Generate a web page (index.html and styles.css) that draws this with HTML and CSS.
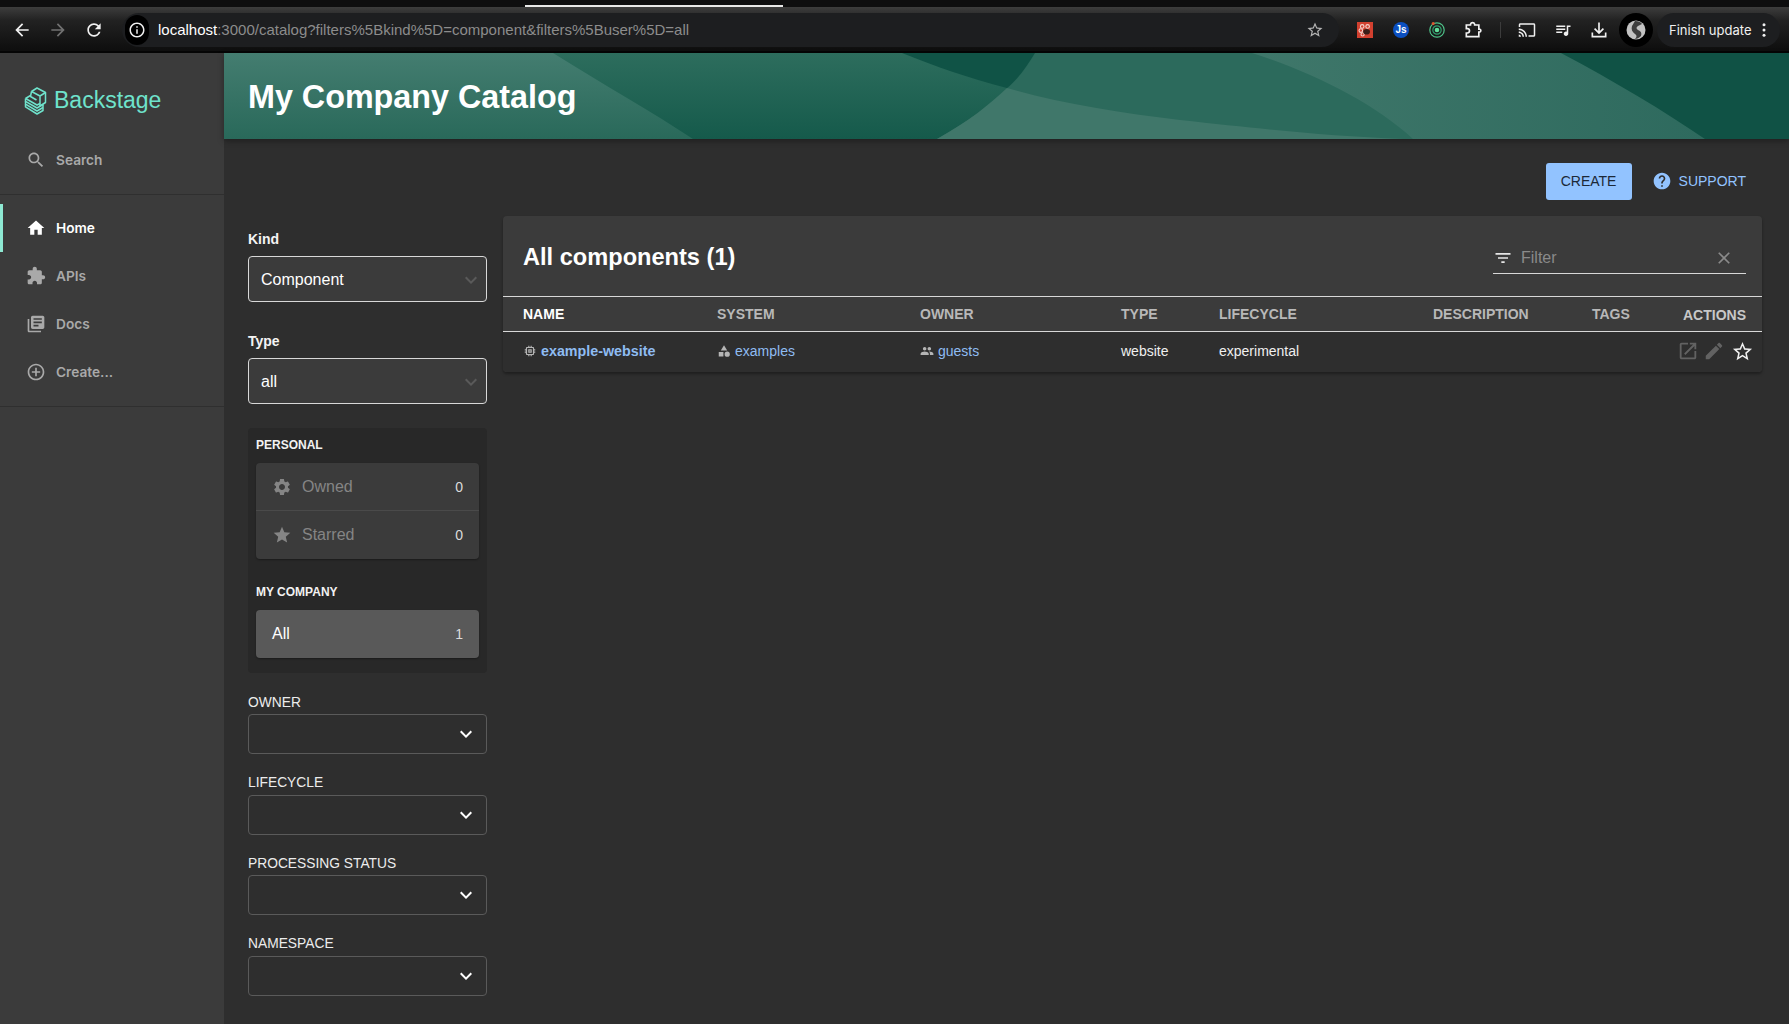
FILE: index.html
```html
<!DOCTYPE html>
<html lang="en">
<head>
    <meta charset="UTF-8">
    <meta name="viewport" content="width=device-width, initial-scale=1.0">
    <title>My Company Catalog</title>
    <link rel="stylesheet" href="styles.css">
</head>
<body>
    <svg class="defs" width="0" height="0">
        <symbol id="chevron" viewBox="0 0 24 24"><path d="M16.59 8.59L12 13.17 7.41 8.59 6 10l6 6 6-6z"/></symbol>
    </svg>

    <div class="tabstrip"><div class="tab-mark"></div></div>

    <div class="toolbar">
        <span class="tool"><svg viewBox="0 0 24 24" class="ico-20"><path d="M20 11H7.83l5.59-5.59L12 4l-8 8 8 8 1.41-1.41L7.83 13H20v-2z"/></svg></span>
        <span class="tool tool-off"><svg viewBox="0 0 24 24" class="ico-20"><path d="M12 4l-1.41 1.41L16.17 11H4v2h12.17l-5.58 5.59L12 20l8-8z"/></svg></span>
        <span class="tool"><svg viewBox="0 0 24 24" class="ico-20"><path d="M17.65 6.35C16.2 4.9 14.21 4 12 4c-4.42 0-7.99 3.58-7.99 8s3.57 8 7.99 8c3.73 0 6.84-2.55 7.73-6h-2.08c-.82 2.33-3.04 4-5.65 4-3.31 0-6-2.69-6-6s2.69-6 6-6c1.66 0 3.14.69 4.22 1.78L13 11h7V4l-2.35 2.35z"/></svg></span>

        <div class="omnibox">
            <span class="site-info">
                <svg viewBox="0 0 24 24" class="ico-18"><path d="M11 7h2v2h-2zm0 4h2v6h-2zm1-9C6.48 2 2 6.48 2 12s4.48 10 10 10 10-4.48 10-10S17.52 2 12 2zm0 18c-4.41 0-8-3.59-8-8s3.59-8 8-8 8 3.59 8 8-3.59 8-8 8z"/></svg>
            </span>
            <span class="url"><b>localhost</b>:3000/catalog?filters%5Bkind%5D=component&amp;filters%5Buser%5D=all</span>
            <svg viewBox="0 0 24 24" class="ico-18 bookmark"><path d="M22 9.24l-7.19-.62L12 2 9.19 8.63 2 9.24l5.46 4.73L5.82 21 12 17.27 18.18 21l-1.63-7.03L22 9.24zM12 15.4l-3.76 2.27 1-4.28-3.32-2.88 4.38-.38L12 6.1l1.71 4.04 4.38.38-3.32 2.88 1 4.28L12 15.4z"/></svg>
        </div>

        <div class="extensions">
            <span class="tool">
                <svg viewBox="0 0 16 16" class="ico-16">
                    <rect width="16" height="16" fill="#d2402f"/>
                    <g fill="none" stroke="#f6d5cf" stroke-width="1.1"><circle cx="5.2" cy="4.4" r="1.8"/><circle cx="10.6" cy="4.4" r="1.8"/><circle cx="3.8" cy="8.6" r="1.8"/><circle cx="5.6" cy="12.4" r="1.6"/></g>
                    <ellipse cx="9.6" cy="9.8" rx="3.4" ry="2.8" fill="#3a1d18"/>
                </svg>
            </span>
            <span class="tool"><span class="js-badge">Js</span></span>
            <span class="tool">
                <svg viewBox="0 0 16 16" class="ico-16">
                    <circle cx="8" cy="8" r="7.2" fill="none" stroke="#4fc48a" stroke-width="1.2"/>
                    <circle cx="8" cy="8" r="4.2" fill="none" stroke="#2f9e6c" stroke-width="1.2"/>
                    <circle cx="8" cy="8" r="2.3" fill="#5fe09a"/>
                    <circle cx="4.2" cy="1.6" r="1.5" fill="#e0562e"/>
                </svg>
            </span>
            <span class="tool">
                <svg viewBox="0 0 24 24" class="ico-20 puzzle"><path d="M4 6h5V5a2.6 2.6 0 0 1 5 0v1h5v5h1.2a1.8 1.8 0 0 1 0 3.4H19V20H4v-4.4h1.2a2.6 2.6 0 0 0 0-5.2H4z"/></svg>
            </span>
        </div>
        <span class="tool-sep"></span>
        <span class="tool"><svg viewBox="0 0 24 24" class="ico-18"><path d="M21 3H3c-1.1 0-2 .9-2 2v3h2V5h18v14h-7v2h7c1.1 0 2-.9 2-2V5c0-1.1-.9-2-2-2zM1 18v3h3c0-1.66-1.34-3-3-3zm0-4v2c2.76 0 5 2.24 5 5h2c0-3.87-3.13-7-7-7zm0-4v2c4.97 0 9 4.03 9 9h2c0-6.08-4.93-11-11-11z"/></svg></span>
        <span class="tool"><svg viewBox="0 0 24 24" class="ico-18"><path d="M15 6H3v2h12V6zm0 4H3v2h12v-2zM3 16h8v-2H3v2zM17 6v8.18c-.31-.11-.65-.18-1-.18-1.66 0-3 1.34-3 3s1.34 3 3 3 3-1.34 3-3V8h3V6h-5z"/></svg></span>
        <span class="tool"><svg viewBox="0 0 24 24" class="ico-20"><path d="M11 3h2v10.2l3.6-3.6L18 11l-6 6-6-6 1.4-1.4 3.6 3.6zM3 15h2v4h14v-4h2v6H3z"/></svg></span>
        <span class="avatar">
            <svg viewBox="0 0 20 20" class="ico-20">
                <circle cx="10" cy="10" r="9.500" fill="#c2c2c2"/>
                <path d="M9 1c3 0 6 1 7 3l-4 2c-2 1-2 3 0 4 3 1 4 3 3 6-2 2-4 3-6 3 2-2 2-4 0-5-3-2-4-5-3-8z" fill="#3e3e3e"/>
            </svg>
        </span>
        <div class="update-pill">
            <span>Finish update</span>
            <svg viewBox="0 0 24 24" class="ico-18"><circle cx="12" cy="5" r="2"/><circle cx="12" cy="12" r="2"/><circle cx="12" cy="19" r="2"/></svg>
        </div>
    </div>

    <div class="app">
        <nav class="sidebar">
            <div class="logo">
                <svg viewBox="0 0 23 28" class="logo-mark">
                    <g fill="none" stroke="#6fe3cc" stroke-width="1.500" stroke-linejoin="round">
                        <path d="M7.500 4.500L13 1l8.500 4.500v10L16 19"/>
                        <path d="M7.500 4.500L16 9v10M16 9l5.500-3.500M7.500 4.500l-1 5 6 3.500"/>
                        <path d="M1.500 11.500l5-3M1.500 11.500L13 18l3-1.500"/>
                        <path d="M1.500 11.500v2.800L13 21l6-3.500"/>
                        <path d="M1.500 14.300v2.800L13 24l6-3.500"/>
                        <path d="M1.500 17.100v2.800L13 27l6-3.500v-6"/>
                    </g>
                </svg>
                <span>Backstage</span>
            </div>
            <a class="nav-item">
                <svg viewBox="0 0 24 24" class="ico-20"><path d="M15.5 14h-.79l-.28-.27C15.41 12.59 16 11.11 16 9.5 16 5.91 13.09 3 9.5 3S3 5.91 3 9.5 5.91 16 9.5 16c1.61 0 3.09-.59 4.23-1.57l.27.28v.79l5 4.99L20.49 19l-4.99-5zm-6 0C7.01 14 5 11.99 5 9.5S7.01 5 9.5 5 14 7.01 14 9.5 11.99 14 9.5 14z"/></svg>
                <span>Search</span>
            </a>
            <div class="nav-group">
                <a class="nav-item nav-active">
                    <svg viewBox="0 0 24 24" class="ico-20"><path d="M10 20v-6h4v6h5v-8h3L12 3 2 12h3v8z"/></svg>
                    <span>Home</span>
                </a>
                <a class="nav-item">
                    <svg viewBox="0 0 24 24" class="ico-20"><path d="M20.5 11H19V7c0-1.1-.9-2-2-2h-4V3.500C13 2.120 11.880 1 10.500 1S8 2.120 8 3.500V5H4c-1.100 0-1.990.9-1.990 2v3.800H3.500c1.490 0 2.700 1.210 2.700 2.700s-1.210 2.700-2.700 2.700H2V20c0 1.100.9 2 2 2h3.800v-1.500c0-1.490 1.210-2.700 2.700-2.700 1.490 0 2.700 1.210 2.700 2.700V22H17c1.100 0 2-.9 2-2v-4h1.500c1.380 0 2.500-1.120 2.500-2.500S21.880 11 20.500 11z"/></svg>
                    <span>APIs</span>
                </a>
                <a class="nav-item">
                    <svg viewBox="0 0 24 24" class="ico-20"><path d="M4 6H2v14c0 1.100.9 2 2 2h14v-2H4V6zm16-4H8c-1.100 0-2 .9-2 2v12c0 1.100.9 2 2 2h12c1.100 0 2-.9 2-2V4c0-1.100-.9-2-2-2zm-1 9H9V9h10v2zm-4 4H9v-2h6v2zm4-8H9V5h10v2z"/></svg>
                    <span>Docs</span>
                </a>
                <a class="nav-item">
                    <svg viewBox="0 0 24 24" class="ico-20"><path d="M13 7h-2v4H7v2h4v4h2v-4h4v-2h-4V7zm-1-5C6.480 2 2 6.480 2 12s4.480 10 10 10 10-4.480 10-10S17.520 2 12 2zm0 18c-4.410 0-8-3.590-8-8s3.590-8 8-8 8 3.590 8 8-3.590 8-8 8z"/></svg>
                    <span>Create...</span>
                </a>
            </div>
        </nav>

        <div class="page">
            <header class="banner">
                <svg class="banner-art" viewBox="0 0 1565 86" preserveAspectRatio="none">
                    <defs>
                        <linearGradient id="gradBase" x1="0" y1="0" x2="0" y2="1"><stop offset="0" stop-color="#2d6d5d"/><stop offset="1" stop-color="#155a4b"/></linearGradient>
                        <linearGradient id="gradLeft" x1="0" y1="0" x2="0" y2="1"><stop offset="0" stop-color="#447d70"/><stop offset="1" stop-color="#29695a"/></linearGradient>
                        <linearGradient id="gradRight" x1="0" y1="0" x2="1" y2="0"><stop offset="0" stop-color="#3f776a"/><stop offset="1" stop-color="#2e6a5e"/></linearGradient>
                    </defs>
                    <rect width="1565" height="86" fill="url(#gradBase)"/>
                    <path d="M0 0H329C380 32 430 60 469 86H0Z" fill="url(#gradLeft)"/>
                    <path d="M811 0C795 30 760 60 713 86H1565V0Z" fill="#2c6a5c"/>
                    <path d="M678 0C710 13 745 25 783 35C795 25 803 13 811 0Z" fill="#105346"/>
                    <path d="M783 35C835 50 895 60 956 67C1040 76 1100 83 1180 86H713C745 68 765 52 783 35Z" fill="#40776a"/>
                    <path d="M1028 0C1090 20 1150 50 1189 86H1481C1440 58 1390 28 1337 0Z" fill="url(#gradRight)"/>
                    <path d="M1337 0C1390 28 1440 58 1481 86H1565V0Z" fill="#105245"/>
                </svg>
                <h1>My Company Catalog</h1>
            </header>

            <main class="content">
                <div class="actions">
                    <button class="btn-create">CREATE</button>
                    <a class="support">
                        <svg viewBox="0 0 24 24" class="ico-20"><path d="M12 2C6.480 2 2 6.480 2 12s4.480 10 10 10 10-4.480 10-10S17.520 2 12 2zm1 17h-2v-2h2v2zm2.070-7.750l-.9.920C13.450 12.900 13 13.500 13 15h-2v-.5c0-1.100.45-2.100 1.170-2.830l1.240-1.260c.37-.36.59-.86.59-1.410 0-1.100-.9-2-2-2s-2 .9-2 2H8c0-2.210 1.790-4 4-4s4 1.790 4 4c0 .88-.36 1.680-.93 2.250z"/></svg>
                        <span>SUPPORT</span>
                    </a>
                </div>

                <div class="columns">
                    <aside class="filters">
                        <label class="field-label">Kind</label>
                        <div class="select-big"><span>Component</span><svg class="chev-dim"><use href="#chevron"/></svg></div>

                        <label class="field-label">Type</label>
                        <div class="select-big"><span>all</span><svg class="chev-dim"><use href="#chevron"/></svg></div>

                        <section class="picker">
                            <h4 class="picker-title">PERSONAL</h4>
                            <div class="picker-list">
                                <div class="picker-row">
                                    <svg viewBox="0 0 24 24" class="ico-20"><path d="M19.140 12.940c.04-.3.06-.61.06-.94 0-.32-.02-.64-.07-.94l2.030-1.580c.18-.14.23-.41.12-.61l-1.920-3.320c-.12-.22-.37-.29-.59-.22l-2.390.96c-.5-.38-1.030-.7-1.620-.94l-.36-2.540c-.04-.24-.24-.41-.48-.41h-3.840c-.24 0-.43.17-.47.41l-.36 2.540c-.59.24-1.130.57-1.620.94l-2.390-.96c-.22-.08-.47 0-.59.22L2.740 8.870c-.12.21-.08.47.12.61l2.030 1.580c-.05.3-.09.63-.09.94s.02.64.07.94l-2.030 1.580c-.18.14-.23.41-.12.61l1.920 3.320c.12.22.37.29.59.22l2.390-.96c.5.38 1.030.7 1.620.94l.36 2.540c.05.24.24.41.48.41h3.840c.24 0 .44-.17.47-.41l.36-2.540c.59-.24 1.130-.56 1.620-.94l2.390.96c.22.08.47 0 .59-.22l1.920-3.320c.12-.22.07-.47-.12-.61l-2.010-1.580zM12 15.600c-1.980 0-3.600-1.620-3.600-3.600s1.620-3.600 3.600-3.600 3.600 1.620 3.600 3.600-1.620 3.600-3.600 3.600z"/></svg>
                                    <span class="picker-name">Owned</span>
                                    <span class="picker-count">0</span>
                                </div>
                                <div class="picker-row">
                                    <svg viewBox="0 0 24 24" class="ico-20"><path d="M12 17.270L18.180 21l-1.640-7.030L22 9.240l-7.190-.61L12 2 9.190 8.630 2 9.240l5.460 4.730L5.820 21z"/></svg>
                                    <span class="picker-name">Starred</span>
                                    <span class="picker-count">0</span>
                                </div>
                            </div>
                            <h4 class="picker-title picker-title-2">MY COMPANY</h4>
                            <div class="picker-row picker-selected">
                                <span class="picker-name">All</span>
                                <span class="picker-count">1</span>
                            </div>
                        </section>

                        <label class="combo-label combo-first">OWNER</label>
                        <div class="combo"><svg class="chev"><use href="#chevron"/></svg></div>
                        <label class="combo-label combo-wide">LIFECYCLE</label>
                        <div class="combo"><svg class="chev"><use href="#chevron"/></svg></div>
                        <label class="combo-label">PROCESSING STATUS</label>
                        <div class="combo"><svg class="chev"><use href="#chevron"/></svg></div>
                        <label class="combo-label combo-wide">NAMESPACE</label>
                        <div class="combo"><svg class="chev"><use href="#chevron"/></svg></div>
                    </aside>

                    <section class="card">
                        <div class="card-head">
                            <h2>All components (1)</h2>
                            <div class="table-filter">
                                <svg viewBox="0 0 24 24" class="ico-20 filter-ico"><path d="M10 18h4v-2h-4v2zM3 6v2h18V6H3zm3 7h12v-2H6v2z"/></svg>
                                <span class="filter-text">Filter</span>
                                <svg viewBox="0 0 24 24" class="ico-20 filter-clear"><path d="M19 6.410L17.590 5 12 10.590 6.410 5 5 6.410 10.590 12 5 17.590 6.410 19 12 13.410 17.590 19 19 17.590 13.410 12z"/></svg>
                            </div>
                        </div>
                        <table class="catalog">
                            <colgroup>
                                <col class="c-name"><col class="c-system"><col class="c-owner"><col class="c-type"><col class="c-life"><col class="c-desc"><col class="c-tags"><col class="c-actions">
                            </colgroup>
                            <thead>
                                <tr>
                                    <th class="th-first">NAME</th>
                                    <th>SYSTEM</th>
                                    <th>OWNER</th>
                                    <th>TYPE</th>
                                    <th>LIFECYCLE</th>
                                    <th>DESCRIPTION</th>
                                    <th>TAGS</th>
                                    <th class="th-actions">ACTIONS</th>
                                </tr>
                            </thead>
                            <tbody>
                                <tr>
                                    <td><a class="link link-strong"><svg viewBox="0 0 24 24" class="ico-14"><path d="M15 9H9v6h6V9zm-2 4h-2v-2h2v2zm8-2V9h-2V7c0-1.100-.9-2-2-2h-2V3h-2v2h-2V3H9v2H7c-1.100 0-2 .9-2 2v2H3v2h2v2H3v2h2v2c0 1.100.9 2 2 2h2v2h2v-2h2v2h2v-2h2c1.100 0 2-.9 2-2v-2h2v-2h-2v-2h2zm-4 6H7V7h10v10z"/></svg>example-website</a></td>
                                    <td><a class="link"><svg viewBox="0 0 24 24" class="ico-14"><path d="M12 2l-5.500 9h11zM17.500 13a4.500 4.500 0 1 0 0 9 4.500 4.500 0 0 0 0-9zM3 13.500h8v8H3z"/></svg>examples</a></td>
                                    <td><a class="link"><svg viewBox="0 0 24 24" class="ico-14"><path d="M16 11c1.660 0 2.990-1.340 2.990-3S17.660 5 16 5c-1.660 0-3 1.340-3 3s1.340 3 3 3zm-8 0c1.660 0 2.990-1.340 2.990-3S9.660 5 8 5C6.340 5 5 6.340 5 8s1.340 3 3 3zm0 2c-2.330 0-7 1.170-7 3.500V19h14v-2.500c0-2.330-4.670-3.500-7-3.500zm8 0c-.29 0-.62.02-.97.05 1.160.84 1.970 1.970 1.970 3.450V19h6v-2.500c0-2.330-4.670-3.500-7-3.500z"/></svg>guests</a></td>
                                    <td>website</td>
                                    <td>experimental</td>
                                    <td></td>
                                    <td></td>
                                    <td class="actions-cell">
                                        <div class="row-actions">
                                            <svg viewBox="0 0 24 24" class="ico-22 act-dim"><path d="M19 19H5V5h7V3H5c-1.110 0-2 .9-2 2v14c0 1.100.89 2 2 2h14c1.100 0 2-.9 2-2v-7h-2v7zM14 3v2h3.590l-9.830 9.830 1.410 1.410L19 6.410V10h2V3h-7z"/></svg>
                                            <svg viewBox="0 0 24 24" class="ico-22 act-dim"><path d="M3 17.250V21h3.750L17.810 9.940l-3.750-3.750L3 17.250zM20.710 7.040c.39-.39.39-1.020 0-1.410l-2.340-2.340c-.39-.39-1.020-.39-1.410 0l-1.830 1.830 3.750 3.750 1.830-1.830z"/></svg>
                                            <svg viewBox="0 0 24 24" class="ico-23 act-star"><path d="M22 9.240l-7.190-.62L12 2 9.190 8.630 2 9.240l5.460 4.730L5.820 21 12 17.270 18.180 21l-1.630-7.030L22 9.240zM12 15.400l-3.760 2.270 1-4.280-3.320-2.880 4.380-.38L12 6.100l1.710 4.040 4.380.38-3.320 2.880 1 4.280L12 15.400z"/></svg>
                                        </div>
                                    </td>
                                </tr>
                            </tbody>
                        </table>
                    </section>
                </div>
            </main>
        </div>
    </div>
</body>
</html>
```

FILE: styles.css
```css
* {
    box-sizing: border-box;
}

html, body {
    margin: 0;
    height: 1024px;
    overflow: hidden;
}

body {
    font-family: "Liberation Sans", Arial, sans-serif;
    background-color: #2e2e2e;
    color: #fff;
    display: flex;
    flex-direction: column;
}

svg {
    fill: currentColor;
    flex-shrink: 0;
    display: block;
}

.defs {
    position: absolute;
}

.ico-14 { width: 14px; height: 14px; }
.ico-16 { width: 16px; height: 16px; }
.ico-18 { width: 18px; height: 18px; }
.ico-20 { width: 20px; height: 20px; }
.ico-22 { width: 22px; height: 22px; }
.ico-23 { width: 23px; height: 23px; }

/* browser chrome */
.tabstrip {
    height: 7px;
    background-color: #0e0e0f;
    display: flex;
    align-items: flex-end;
}

.tab-mark {
    width: 258px;
    height: 2px;
    margin-left: 525px;
    background-color: #e8e8e8;
}

.toolbar {
    height: 46px;
    display: flex;
    align-items: center;
    padding: 1px 0 0 4px;
    background: linear-gradient(#3d3d3d, #222 30%, #0f0f0f 95%);
    border-bottom: 2px solid #050505;
    color: #f0f0f0;
}

.tool {
    width: 36px;
    height: 36px;
    display: flex;
    align-items: center;
    justify-content: center;
}

.tool-off {
    color: #717171;
}

.omnibox {
    width: 1217px;
    height: 34px;
    margin-left: 10px;
    display: flex;
    align-items: center;
    border-radius: 17px;
    background-color: #1d1e20;
}

.site-info {
    width: 24px;
    height: 30px;
    margin-left: 3px;
    border-radius: 12px;
    background-color: #000;
    display: flex;
    align-items: center;
    justify-content: center;
}

.url {
    margin-left: 9px;
    flex: 1;
    font-size: 15px;
    color: #8c8c8c;
}

.url b {
    font-weight: 400;
    color: #fff;
}

.bookmark {
    margin-right: 15px;
    color: #b5b5b5;
}

.extensions {
    display: flex;
    margin-left: 8px;
}

.js-badge {
    width: 16px;
    height: 16px;
    border-radius: 50%;
    background-color: #0b4fc0;
    color: #fff;
    font-size: 10px;
    font-weight: 700;
    line-height: 16px;
    text-align: center;
}

.puzzle {
    fill: none;
    stroke: #f2f2f2;
    stroke-width: 2;
}

.tool-sep {
    width: 1px;
    height: 16px;
    margin: 0 8px 0 9px;
    background-color: #3c3c3c;
}

.avatar {
    width: 34px;
    height: 34px;
    margin-left: 2px;
    border-radius: 50%;
    background-color: #000;
    display: flex;
    align-items: center;
    justify-content: center;
}

.update-pill {
    width: 123px;
    height: 34px;
    margin-left: 4px;
    padding-left: 12px;
    border-radius: 17px;
    background-color: #1d1e20;
    display: flex;
    align-items: center;
    gap: 4px;
    font-family: Inter, sans-serif;
    font-size: 13px;
    white-space: nowrap;
}

/* app frame */
.app {
    flex: 1;
    display: flex;
    min-height: 0;
}

.sidebar {
    width: 224px;
    flex-shrink: 0;
    background-color: #3b3b3b;
    font-family: Inter, sans-serif;
}

.logo {
    height: 83px;
    padding: 12px 0 0 24px;
    display: flex;
    align-items: center;
    gap: 7px;
    color: #6fe3cc;
    font-family: "Liberation Sans", sans-serif;
    font-size: 23px;
}

.logo-mark {
    width: 23px;
    height: 28px;
}

.nav-item {
    height: 48px;
    padding-left: 23px;
    display: flex;
    align-items: center;
    gap: 10px;
    font-size: 13.7px;
    font-weight: 600;
    color: #a9a9a9;
    border-left: 3px solid transparent;
}

.nav-group {
    margin-top: 10px;
    padding: 9px 0 10px;
    border-top: 1px solid #2f2f2f;
    border-bottom: 1px solid #2f2f2f;
}

.nav-active {
    color: #fff;
    border-left-color: #8ee9d3;
}

.page {
    flex: 1;
    min-width: 0;
}

.banner {
    position: relative;
    height: 86px;
    display: flex;
    align-items: center;
    padding-left: 24px;
    box-shadow: 0 2px 6px rgba(0, 0, 0, 0.35);
}

.banner-art {
    position: absolute;
    top: 0;
    left: 0;
    width: 100%;
    height: 100%;
}

.banner h1 {
    position: relative;
    margin: 2px 0 0;
    font-size: 32.3px;
    font-weight: 700;
}

.content {
    padding: 24px 27px 0 24px;
}

.actions {
    height: 37px;
    padding-right: 16px;
    display: flex;
    justify-content: flex-end;
    align-items: center;
    gap: 20px;
    margin-bottom: 16px;
}

.btn-create {
    width: 86px;
    height: 37px;
    padding-bottom: 3px;
    border: none;
    border-radius: 3px;
    background-color: #92c3ff;
    color: #1c2836;
    font-family: "Liberation Sans", sans-serif;
    font-size: 14px;
}

.support {
    display: flex;
    align-items: center;
    gap: 7px;
    padding-bottom: 1px;
    color: #92c3ff;
    font-size: 14px;
}

.columns {
    display: grid;
    grid-template-columns: 239px 1fr;
    gap: 16px;
    align-items: start;
}

/* left filter column */
.filters {
    padding-top: 15px;
}

.field-label {
    display: block;
    height: 16px;
    line-height: 16px;
    font-size: 14px;
    font-weight: 700;
    color: #f4f4f4;
    margin-bottom: 9px;
}

.select-big {
    height: 46px;
    margin-bottom: 31px;
    padding: 1px 12px 0;
    display: flex;
    align-items: center;
    justify-content: space-between;
    border: 1px solid #d8d8d8;
    border-radius: 4px;
    background-color: #3b3b3b;
    font-size: 16px;
}

.chev-dim {
    width: 24px;
    height: 24px;
    margin-right: -9px;
    color: #5a5a5a;
}

.picker {
    margin-top: -7px;
    padding: 9px 8px 15px;
    border-radius: 4px;
    background-color: #282828;
}

.picker-title {
    margin: 0 0 10px;
    height: 16px;
    line-height: 16px;
    font-size: 12px;
    font-weight: 700;
    color: #f2f2f2;
}

.picker-title-2 {
    margin: 25px 0 10px;
}

.picker-list {
    height: 96px;
    border-radius: 4px;
    background-color: #3b3b3b;
    box-shadow: 0 1px 2px rgba(0, 0, 0, 0.35);
}

.picker-row {
    height: 48px;
    padding: 0 16px 0 16px;
    display: flex;
    align-items: center;
    gap: 10px;
    color: #858585;
}

.picker-row + .picker-row {
    margin-top: -1px;
    border-top: 1px solid #4a4a4a;
}

.picker-name {
    flex: 1;
    font-size: 16px;
}

.picker-count {
    font-size: 14px;
    color: #dcdcdc;
}

.picker-selected {
    padding-left: 16px;
    border-radius: 4px;
    background-color: #595959;
    box-shadow: 0 1px 2px rgba(0, 0, 0, 0.35);
}

.picker-selected .picker-name {
    color: #fff;
}

.combo-label {
    display: block;
    height: 16px;
    line-height: 18px;
    font-size: 13.8px;
    color: #ececec;
    margin: 20px 0 4px;
}

.combo-first {
    margin-top: 21px;
}

.combo-wide {
    margin-bottom: 5px;
}

.combo {
    height: 40px;
    padding-right: 8px;
    display: flex;
    align-items: center;
    justify-content: flex-end;
    border: 1px solid #5a5a5a;
    border-radius: 4px;
}

.chev {
    width: 24px;
    height: 24px;
    color: #fff;
}

/* table card */
.card {
    height: 156px;
    border-radius: 4px;
    background-color: #3b3b3b;
    box-shadow: 0 2px 3px rgba(0, 0, 0, 0.35);
    overflow: hidden;
}

.card-head {
    height: 80px;
    padding: 0 16px 22px 20px;
    display: flex;
    justify-content: space-between;
    align-items: flex-end;
}

.card-head h2 {
    margin: 0 0 1px;
    font-size: 23.6px;
    line-height: 32px;
    font-weight: 700;
}

.table-filter {
    width: 253px;
    height: 34px;
    padding-top: 2px;
    display: flex;
    align-items: center;
    border-bottom: 1px solid #d8d8d8;
    color: #8a8a8a;
    font-size: 16px;
}

.filter-ico {
    color: #e6e6e6;
}

.filter-text {
    flex: 1;
    margin-left: 8px;
}

.filter-clear {
    margin-right: 12px;
}

.catalog {
    width: 100%;
    border-collapse: collapse;
    table-layout: fixed;
}

.c-name { width: 194px; }
.c-system { width: 203px; }
.c-owner { width: 201px; }
.c-type { width: 98px; }
.c-life { width: 214px; }
.c-desc { width: 159px; }
.c-tags { width: 91px; }
.c-actions { width: 99px; }

.catalog th {
    height: 35px;
    padding: 0 0 0 20px;
    border-top: 1px solid #d8d8d8;
    border-bottom: 1px solid #d8d8d8;
    text-align: left;
    font-size: 14px;
    font-weight: 700;
    color: #b8b8b8;
}

.catalog .th-first {
    color: #fff;
}

.catalog .th-actions {
    padding: 2px 16px 0 0;
    text-align: right;
    color: #c8c8c8;
}

.catalog td {
    height: 41px;
    padding: 0 0 2px 20px;
    background-color: #2e2e2e;
    font-size: 14px;
    color: #f0f0f0;
}

.link {
    display: flex;
    align-items: center;
    gap: 4px;
    color: #8fbcf2;
}

.link svg {
    color: #b5b5b5;
}

.link-strong {
    font-size: 14.3px;
    font-weight: 700;
}

.catalog .actions-cell {
    padding: 0 8px 1px 0;
}

.row-actions {
    display: flex;
    align-items: center;
    justify-content: flex-end;
    gap: 4px;
}

.act-dim {
    margin-bottom: 2px;
    color: #626262;
}

.act-star {
    margin-left: 2px;
}
```
